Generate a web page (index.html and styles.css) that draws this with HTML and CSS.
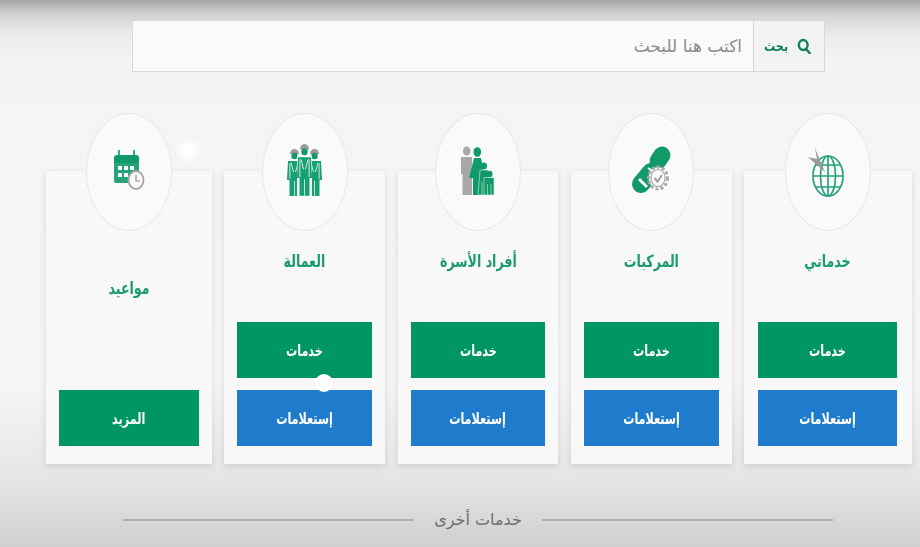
FILE: index.html
```html
<!DOCTYPE html>
<html lang="ar" dir="rtl">

<head>
  <meta charset="UTF-8" />
  <meta name="viewport" content="width=device-width, initial-scale=1.0" />
  <title>الخدمات</title>
  <link rel="stylesheet" href="styles.css">
</head>

<body>
  <form class="search">
    <button class="search-btn" type="button">
      <svg class="search-icon" viewBox="0 0 14 16" width="14" height="16">
        <ellipse cx="6.2" cy="7" rx="4.4" ry="5" fill="none" stroke="#14805f" stroke-width="2.4" />
        <path d="M9 11 L12.6 15" stroke="#14805f" stroke-width="2.6" stroke-linecap="round" />
      </svg>
      <span class="search-label">بحث</span>
    </button>
    <input class="search-input" type="text" placeholder="اكتب هنا للبحث" />
  </form>

  <div class="cards">
    <div class="card card-first">
      <div class="circle">
        <svg viewBox="0 0 60 80" width="60" height="80">
          <g fill="none" stroke="#27a27a" stroke-width="1.7">
            <ellipse cx="30" cy="44" rx="15" ry="20" />
            <ellipse cx="30" cy="44" rx="7.5" ry="20" />
            <path d="M30 24 V64 M15 44 H45 M17.5 33 H42.5 M17.5 55 H42.5" />
          </g>
          <polygon points="17,16 21,26 27,40 10,25 19,27" fill="#999999" />
        </svg>
      </div>
      <h2 class="card-title">خدماتي</h2>
      <div class="card-actions">
        <a class="btn btn-green"><span class="btn-label">خدمات</span></a>
        <a class="btn btn-blue"><span class="btn-label">إستعلامات</span></a>
      </div>
    </div>

    <div class="card">
      <div class="circle">
        <svg viewBox="0 0 60 80" width="60" height="80">
          <g stroke="#0f9a68" stroke-linecap="round" fill="none">
            <path d="M20 52 L30 40" stroke-width="18" />
            <path d="M37 29 L41 23" stroke-width="17" />
          </g>
          <path d="M27 36 L33 40" stroke="#fafafa" stroke-width="2" />
          <path d="M18 47 L26 55" stroke="#fafafa" stroke-width="3" />
          <ellipse cx="37" cy="46" rx="9.5" ry="11" fill="#fafafa" stroke="#a9a9a9" stroke-width="3" stroke-dasharray="3 2.2" />
          <ellipse cx="37" cy="46" rx="7" ry="8.5" fill="#fafafa" stroke="#a9a9a9" stroke-width="1.2" />
          <path d="M33.5 46 L36.5 49.5 L41 43" fill="none" stroke="#a0a0a0" stroke-width="2" />
        </svg>
      </div>
      <h2 class="card-title">المركبات</h2>
      <div class="card-actions">
        <a class="btn btn-green"><span class="btn-label">خدمات</span></a>
        <a class="btn btn-blue"><span class="btn-label">إستعلامات</span></a>
      </div>
    </div>

    <div class="card">
      <div class="circle">
        <svg viewBox="0 0 60 80" width="60" height="80">
          <ellipse cx="18.7" cy="19" rx="3.8" ry="4.6" fill="#a8a8a8" />
          <path d="M13 25 H24 V63 H14.5 V42 H13 Z" fill="#a8a8a8" />
          <ellipse cx="29.3" cy="20" rx="3.8" ry="4.8" fill="#0f9a68" />
          <path d="M26 26 H33 L37 46 H33 V63 H25 V46 H21 Z" fill="#0f9a68" />
          <ellipse cx="36" cy="34" rx="3" ry="3.5" fill="#0f9a68" />
          <path d="M32 38 H40 L41 63 H30 Z" fill="#0f9a68" stroke="#fafafa" stroke-width=".5" />
          <ellipse cx="41.7" cy="42" rx="2.8" ry="3.3" fill="#0f9a68" />
          <path d="M36 45.5 H46 V63 H36 Z" fill="#0f9a68" stroke="#fafafa" stroke-width=".5" />
          <path d="M39.5 52 V63 M43 52 V63 M34 50 V63" stroke="#fafafa" stroke-width=".5" />
        </svg>
      </div>
      <h2 class="card-title">أفراد الأسرة</h2>
      <div class="card-actions">
        <a class="btn btn-green"><span class="btn-label">خدمات</span></a>
        <a class="btn btn-blue"><span class="btn-label">إستعلامات</span></a>
      </div>
    </div>

    <div class="card">
      <div class="circle">
        <svg viewBox="0 0 60 80" width="60" height="80">
          <defs>
            <g id="worker">
              <path d="M-4.5 0 A4.5 5 0 0 1 4.5 0 Z" fill="#9a9a9a" />
              <ellipse cx="0" cy="2" rx="3.2" ry="3.2" fill="#0f9a68" />
              <path d="M-6.5 7 H6.5 L7.5 26 H5 V42 H-5 V26 H-7.5 Z" fill="#17a074" />
              <path d="M-4.6 9 V25 M4.6 9 V25 M-3.5 9 L-1 18 M3.5 9 L1 18" stroke="#fafafa" stroke-width=".8" fill="none" />
              <path d="M0 27 V42" stroke="#fafafa" stroke-width=".7" fill="none" />
            </g>
          </defs>
          <use href="#worker" x="19.5" y="22" />
          <use href="#worker" x="39.5" y="22" />
          <path d="M22 24 H37 V64 H22 Z" fill="#fafafa" />
          <use href="#worker" transform="translate(29.5 17.5) scale(1 1.1)" />
        </svg>
      </div>
      <h2 class="card-title">العمالة</h2>
      <div class="card-actions">
        <a class="btn btn-green"><span class="btn-label">خدمات</span></a>
        <a class="btn btn-blue"><span class="btn-label">إستعلامات</span></a>
      </div>
    </div>

    <div class="card card-last">
      <div class="circle">
        <svg viewBox="0 0 60 80" width="60" height="80">
          <path d="M20 18 V25 M35 18 V25" stroke="#1da377" stroke-width="1.8" />
          <path d="M15 26 Q15 23 18 23 H37 Q40 23 40 26 V31 H15 Z" fill="#0f9a68" />
          <path d="M15 31 H40 V42 H34 L29 51 H17 Q15 51 15 49 Z" fill="#27a27a" />
          <path d="M19 34 h4 v4 h-4 z M25 34 h4 v4 h-4 z M31 34 h4 v4 h-4 z M19 41 h4 v4 h-4 z M25 41 h4 v4 h-4 z" fill="#fafafa" />
          <ellipse cx="37" cy="48" rx="7.5" ry="9" fill="#fafafa" stroke="#a6a6a6" stroke-width="1.8" />
          <path d="M37 43 V49 H41" fill="none" stroke="#a6a6a6" stroke-width="1.5" />
        </svg>
      </div>
      <h2 class="card-title card-title-low">مواعيد</h2>
      <div class="card-actions">
        <a class="btn btn-green"><span class="btn-label">المزيد</span></a>
      </div>
    </div>
  </div>

  <div class="other">
    <span class="other-line"></span>
    <h3 class="other-title">خدمات أخرى</h3>
    <span class="other-line"></span>
  </div>

  <!-- white spots over the page -->
  <span class="spot spot-blur"></span>
  <span class="spot spot-cursor"></span>
</body>

</html>
```

FILE: styles.css
```css
/* Global Styles */
* {
  box-sizing: border-box;
  margin: 0;
  padding: 0;
  font-family: "DejaVu Sans", sans-serif;
}

html,
body {
  height: 547px;
  overflow: hidden;
}

body {
  position: relative;
  padding-top: 20px;
  background: linear-gradient(to bottom, #a6a6a6 0, #d2d2d2 14px, #ececec 34px, #f4f4f4 60px, #f6f6f6 380px, #e9e9e8 460px, #e2e2e1 490px, #cfcfcf 547px);
}

/* Search */
.search {
  display: flex;
  width: 693px;
  height: 52px;
  margin-right: 95px;
  border: 1px solid #d8d8d8;
  background: #fafafa;
}

.search-btn {
  display: flex;
  align-items: center;
  gap: 6px;
  width: 71px;
  padding-right: 13px;
  border: none;
  border-left: 1px solid #d6d6d6;
  background: #f3f3f3;
  color: #14805f;
  font-size: 14px;
  font-weight: 700;
}

.search-label {
  transform: scaleX(0.8);
}

.search-input {
  flex: 1;
  padding-right: 11px;
  border: none;
  background: transparent;
  font-size: 17px;
}

.search-input::placeholder {
  color: #8c8c8c;
  opacity: 1;
}

/* Cards */
.cards {
  display: flex;
  gap: 12.5px;
  margin-top: 99px;
  padding-right: 8px;
}

.card {
  display: flex;
  flex-direction: column;
  flex: 0 0 160.75px;
  height: 293px;
  padding: 0 13px 18px;
  background: #f8f8f8;
  box-shadow: 0 2px 7px rgba(0, 0, 0, 0.12);
}

.card-first {
  flex-basis: 168px;
  padding: 0 15px 18px 14px;
}

.card-last {
  flex-basis: 166px;
}

.circle {
  display: flex;
  align-items: center;
  justify-content: center;
  flex: none;
  width: 86px;
  height: 118px;
  margin: -58px auto 0;
  border: 1px solid #e8e8e8;
  border-radius: 50%;
  background: #fafafa;
}

.card-title {
  margin-top: 16px;
  height: 28px;
  line-height: 28px;
  text-align: center;
  color: #1a9b70;
  font-size: 17px;
  font-weight: 700;
  transform: scaleX(0.74);
}

.card-title-low {
  margin-top: 43px;
}

.card-actions {
  display: flex;
  flex-direction: column;
  gap: 12px;
  margin-top: auto;
}

.btn {
  display: flex;
  align-items: center;
  justify-content: center;
  height: 56px;
  color: #ffffff;
  font-size: 16px;
  font-weight: 700;
}

.btn-label {
  transform: scaleX(0.7);
}

.btn-green {
  background: #009663;
}

.btn-blue {
  background: #1f7bcb;
}

/* Other services */
.other {
  display: flex;
  align-items: center;
  gap: 20px;
  margin-top: 46px;
  padding: 0 87px 0 123px;
}

.other-line {
  flex: 1;
  height: 2px;
  background: #b0b0af;
}

.other-title {
  color: #707070;
  font-size: 16px;
  font-weight: 400;
}

.spot {
  position: absolute;
  border-radius: 50%;
  background: #ffffff;
}

.spot-blur {
  left: 179px;
  top: 141px;
  width: 18px;
  height: 18px;
  filter: blur(3px);
}

.spot-cursor {
  left: 315px;
  top: 374px;
  width: 18px;
  height: 18px;
}
```
